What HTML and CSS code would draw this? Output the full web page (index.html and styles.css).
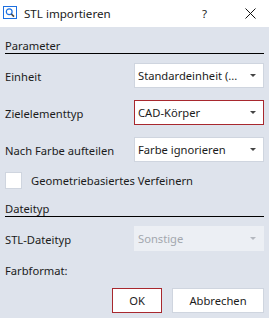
FILE: index.html
```html
<!DOCTYPE html>
<html lang="de">
<head>
    <meta charset="UTF-8">
    <meta name="viewport" content="width=device-width, initial-scale=1.0">
    <title>STL importieren</title>
    <link rel="stylesheet" href="styles.css">
</head>
<body>

<div class="dialog">
    <div class="titlebar">
        <svg class="app-icon" width="14" height="13" viewBox="0 0 14 13">
            <rect x="0.5" y="0.5" width="13" height="12" fill="none" stroke="#1c6fe0" stroke-width="1"/>
            <circle cx="6.2" cy="5.8" r="2.9" fill="none" stroke="#1c6fe0" stroke-width="1.2"/>
            <path d="M8.3 8 L11 10.6" stroke="#444" stroke-width="1.6"/>
        </svg>
        <span class="title">STL importieren</span>
        <span class="help">?</span>
        <svg class="close" width="11" height="11" viewBox="0 0 11 11">
            <path d="M0.5 0.5 L10.5 10.5 M10.5 0.5 L0.5 10.5" stroke="#111" stroke-width="1"/>
        </svg>
    </div>

    <div class="content">
        <div class="section-head">Parameter</div>

        <div class="form-row">
            <label>Einheit</label>
            <div class="dropdown">
                <span class="value">Standardeinheit (...</span>
                <span class="arrow"></span>
            </div>
        </div>

        <div class="form-row">
            <label>Zielelementtyp</label>
            <div class="dropdown focused">
                <span class="value">CAD-Körper</span>
                <span class="arrow"></span>
            </div>
        </div>

        <div class="form-row">
            <label>Nach Farbe aufteilen</label>
            <div class="dropdown">
                <span class="value">Farbe ignorieren</span>
                <span class="arrow"></span>
            </div>
        </div>

        <div class="check-row">
            <span class="checkbox"></span>
            <span>Geometriebasiertes Verfeinern</span>
        </div>

        <div class="section-head second">Dateityp</div>

        <div class="form-row">
            <label>STL-Dateityp</label>
            <div class="dropdown disabled">
                <span class="value">Sonstige</span>
                <span class="arrow"></span>
            </div>
        </div>

        <div class="plain-row">Farbformat:</div>

        <div class="buttons">
            <button type="button" class="btn ok">OK</button>
            <button type="button" class="btn">Abbrechen</button>
        </div>
    </div>
</div>

</body>
</html>
```

FILE: styles.css
```css
/* Colors */
:root {
    --panel: #dee3ec;
    --text: #1b1b1b;
    --field-border: #cfd5df;
    --accent-red: #a8282e;
    --disabled-bg: #eceff4;
    --disabled-text: #a3a7ae;
}

body {
    margin: 0;
    padding: 0;
    font-family: "Noto Sans", "Open Sans", sans-serif;
    font-size: 11.2px;
    color: var(--text);
    background-color: var(--panel);
}

.dialog {
    width: 269px;
    height: 318px;
    background-color: var(--panel);
}

/* Title bar */
.titlebar {
    height: 27px;
    background-color: #ffffff;
    display: flex;
    align-items: center;
    padding-left: 3px;
    box-sizing: border-box;
}

.app-icon {
    margin-top: -2px;
}

.title {
    margin-left: 7px;
    flex: 1;
    font-size: 11.6px;
    line-height: 16px;
}

.help {
    width: 8px;
    margin-right: 35px;
    font-size: 11.6px;
}

.close {
    margin-right: 13px;
}

/* Content */
.content {
    padding: 0 5px;
}

.section-head {
    margin-top: 11px;
    height: 15px;
    line-height: 15px;
    border-bottom: 1px solid #000000;
}

.section-head.second {
    margin-top: 12px;
}

.form-row {
    display: flex;
    align-items: center;
    justify-content: space-between;
    margin-top: 9px;
}

.form-row + .form-row {
    margin-top: 12px;
}

.form-row label {
    padding-top: 2px;
}

.dropdown {
    width: 130px;
    height: 25px;
    box-sizing: border-box;
    border: 1px solid var(--field-border);
    background-color: #ffffff;
    display: flex;
    align-items: center;
    padding: 0 7px 0 3px;
}

.dropdown .value {
    flex: 1;
    white-space: nowrap;
    overflow: hidden;
}

.arrow {
    width: 0;
    height: 0;
    border-left: 3px solid transparent;
    border-right: 3px solid transparent;
    border-top: 3px solid #444444;
}

.dropdown.focused {
    border-color: var(--accent-red);
}

.dropdown.disabled {
    background-color: var(--disabled-bg);
    border-color: var(--disabled-bg);
    color: var(--disabled-text);
}

.dropdown.disabled .arrow {
    border-top-color: #b4b8bf;
}

.check-row {
    display: flex;
    align-items: center;
    margin-top: 10px;
    height: 17px;
}

.checkbox {
    width: 17px;
    height: 17px;
    box-sizing: border-box;
    background-color: #ffffff;
    border: 1px solid var(--field-border);
    margin-right: 9px;
}

.plain-row {
    margin-top: 12px;
    line-height: 16px;
}

.buttons {
    display: flex;
    justify-content: flex-end;
    gap: 10px;
    margin-top: 9px;
}

.btn {
    height: 25px;
    box-sizing: border-box;
    background-color: #ffffff;
    border: 1px solid var(--field-border);
    font-family: inherit;
    font-size: 11.2px;
    color: var(--text);
    padding: 0;
    width: 92px;
}

.btn.ok {
    width: 50px;
    border-color: var(--accent-red);
}
```
